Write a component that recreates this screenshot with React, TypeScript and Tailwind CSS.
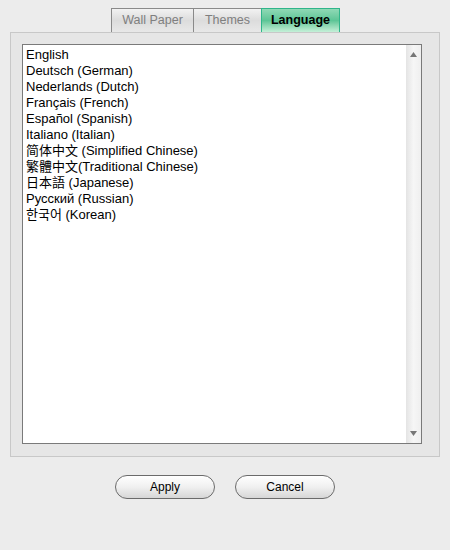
import type React from "react"

const LANGUAGES = [
  "English",
  "Deutsch (German)",
  "Nederlands (Dutch)",
  "Français (French)",
  "Español (Spanish)",
  "Italiano (Italian)",
  "简体中文 (Simplified Chinese)",
  "繁體中文(Traditional Chinese)",
  "日本語 (Japanese)",
  "Русский (Russian)",
  "한국어 (Korean)",
]

const font = { fontFamily: '"Liberation Sans", Arial, "Noto Sans CJK SC", "Noto Sans CJK JP", "Noto Sans CJK KR", sans-serif' }

const Tab: React.FC<{ label: string; active?: boolean; width: string }> = ({ label, active, width }) => (
  <div
    className={`${width} h-[25px] flex items-center justify-center text-[12.5px] border ${
      active
        ? "border-[#2fb58a] bg-gradient-to-b from-[#8fd9b6] via-[#5cc596] to-[#c4f0d8] text-black font-bold"
        : "border-[#8a8a8a] bg-gradient-to-b from-[#f2f2f2] via-[#dcdcdc] to-[#e8e8e8] text-[#7f7f7f]"
    }`}
  >
    {label}
  </div>
)

export default function App() {
  return (
    <div className="w-[450px] h-[550px] bg-[#ececec] flex flex-col" style={font}>
      <div className="flex pl-[111px] pt-[8px] h-[33px]">
        <Tab label="Wall Paper" width="w-[83px]" />
        <Tab label="Themes" width="w-[69px] -ml-px" />
        <Tab label="Language" active width="w-[79px] -ml-px" />
      </div>

      <div className="mx-[10px] -mt-px w-[430px] h-[425px] border border-[#c8c8c8] bg-[#e6e6e6] pt-[11px] pl-[11px]">
        <div className="w-[400px] h-[400px] border border-[#7a7a7a] bg-white flex">
          <div className="flex-1 pt-[2px] pl-[3px] text-[13px] leading-[16px] text-black">
            {LANGUAGES.map((l) => (
              <div key={l}>{l}</div>
            ))}
          </div>
          <div className="w-[15px] h-full bg-gradient-to-r from-[#e4e4e4] via-[#f6f6f6] to-[#efefef] flex flex-col items-center justify-between py-[7px]">
            <svg width="7" height="5" viewBox="0 0 7 5">
              <path d="M3.5 0 L7 5 L0 5 Z" fill="#777" />
            </svg>
            <svg width="7" height="5" viewBox="0 0 7 5">
              <path d="M0 0 L7 0 L3.5 5 Z" fill="#777" />
            </svg>
          </div>
        </div>
      </div>

      <div className="flex justify-center gap-[20px] mt-[18px]">
        {["Apply", "Cancel"].map((b) => (
          <button
            key={b}
            className="w-[100px] h-[24px] rounded-full border border-[#6b6b6b] bg-gradient-to-b from-[#ffffff] via-[#f0f0f0] to-[#d6d6d6] text-[12px] text-black"
          >
            {b}
          </button>
        ))}
      </div>
    </div>
  )
}
